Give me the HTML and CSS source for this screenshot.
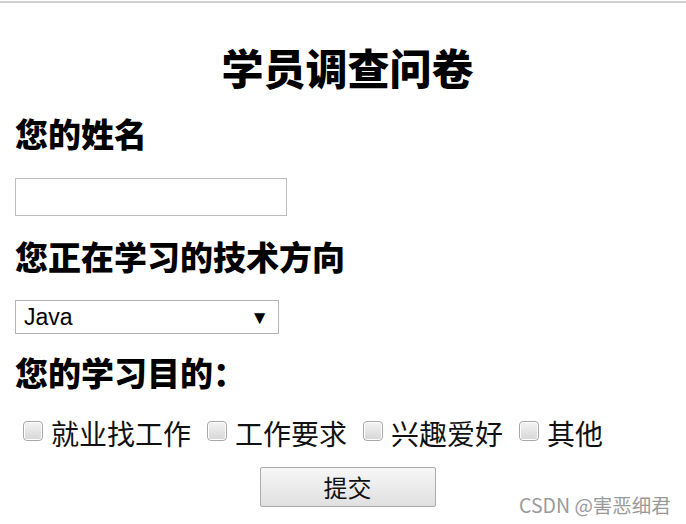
FILE: index.html
```html
<!DOCTYPE html>
<html lang="zh">
<head>
<meta charset="utf-8">
<title>学员调查问卷</title>
<link rel="stylesheet" href="styles.css">
</head>
<body>
<div class="topline"></div>
<form class="survey">
  <h1 class="title">学员调查问卷</h1>
  <h2 class="q q-name">您的姓名</h2>
  <input class="text-input" type="text">
  <h2 class="q q-tech">您正在学习的技术方向</h2>
  <div class="select"><span class="select-value">Java</span><span class="select-arrow">▼</span></div>
  <h2 class="q q-goal">您的学习目的：</h2>
  <div class="checks">
    <label class="check"><input type="checkbox" class="box"><span>就业找工作</span></label>
    <label class="check"><input type="checkbox" class="box"><span>工作要求</span></label>
    <label class="check"><input type="checkbox" class="box"><span>兴趣爱好</span></label>
    <label class="check"><input type="checkbox" class="box"><span>其他</span></label>
  </div>
  <div class="actions"><button type="button" class="submit">提交</button></div>
</form>
<div class="watermark">CSDN @害恶细君</div>
</body>
</html>
```

FILE: styles.css
```css
html, body {
  margin: 0;
  padding: 0;
  background: #fff;
}
body {
  width: 686px;
  height: 524px;
  position: relative;
  overflow: hidden;
  font-family: "Noto Sans CJK SC", "Liberation Sans", sans-serif;
  color: #000;
}
.topline {
  margin-top: 1px;
  height: 2px;
  background: #cfcfcf;
}
.survey {
  display: flex;
  flex-direction: column;
  align-items: flex-start;
  padding: 0 6px 0 15px;
}
.title {
  align-self: stretch;
  text-align: center;
  margin: 43px 0 0 0;
  font-size: 42px;
  line-height: 42px;
  font-weight: 900;
}
.q {
  margin: 0;
  font-size: 33px;
  line-height: 33px;
  font-weight: 900;
}
.q-name { margin-top: 29px; }
.q-tech { margin-top: 24px; }
.q-goal { margin-top: 22px; }
.text-input {
  margin: 28px 0 0 0;
  box-sizing: border-box;
  width: 272px;
  height: 38px;
  border: 1px solid #bdbdbd;
  padding: 0;
  background: #fff;
}
.select {
  margin-top: 27px;
  box-sizing: border-box;
  width: 264px;
  height: 34px;
  border: 1px solid #b5b5b5;
  display: flex;
  align-items: center;
  justify-content: space-between;
  padding: 0 9px 0 8px;
  font-family: "Liberation Sans", Arial, sans-serif;
}
.select-value {
  font-size: 23px;
  line-height: 23px;
}
.select-arrow {
  font-size: 19px;
  line-height: 19px;
}
.checks {
  margin-top: 30px;
  display: flex;
  align-items: center;
  gap: 16px;
  padding-left: 8px;
}
.check {
  display: flex;
  align-items: center;
  gap: 8px;
  font-size: 28px;
  line-height: 28px;
  color: #111;
}
.box {
  appearance: none;
  -webkit-appearance: none;
  margin: 0;
  width: 20px;
  height: 20px;
  box-sizing: border-box;
  border: 1px solid #a8a8a8;
  border-radius: 4px;
  background: linear-gradient(#f4f4f4, #d6d6d6);
  box-shadow: inset 0 0 0 1px #fff;
  position: relative;
  top: -2px;
}
.actions {
  align-self: stretch;
  display: flex;
  justify-content: center;
  margin-top: 20px;
}
.submit {
  box-sizing: border-box;
  width: 176px;
  height: 40px;
  border: 1px solid #acacac;
  border-radius: 2px;
  background: linear-gradient(#f7f7f7, #e0e0e0);
  font-family: "Noto Sans CJK SC", sans-serif;
  font-size: 24px;
  line-height: 24px;
  color: #111;
  padding: 0;
}
.watermark {
  position: absolute;
  left: 519px;
  top: 493px;
  font-family: "Noto Sans CJK SC", "Liberation Sans", sans-serif;
  font-size: 19.5px;
  line-height: 24px;
  color: #9a9a9a;
  white-space: nowrap;
}
```
